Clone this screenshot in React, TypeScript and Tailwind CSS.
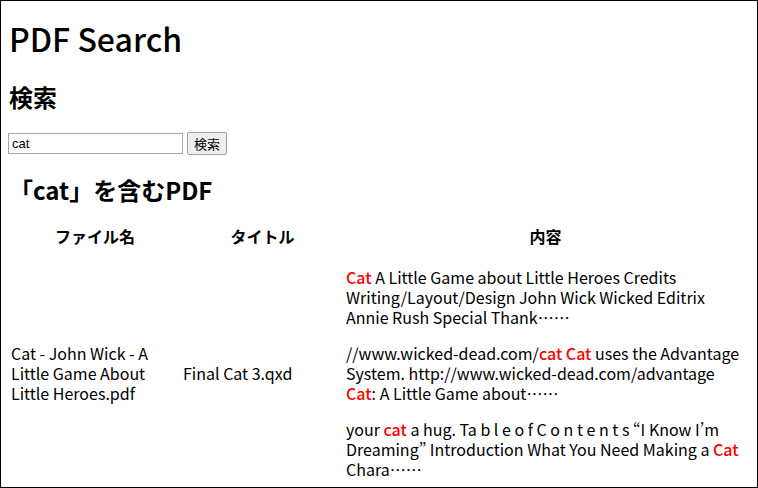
function Hit({ children }: { children: React.ReactNode }) {
  return <span className="font-medium text-[#ff0000]">{children}</span>
}

// full-width centred ellipsis, as the Japanese font draws it
function Ell() {
  return (
    <span lang="ja" className="[font-variant-east-asian:full-width]">
      ……
    </span>
  )
}

export default function App() {
  return (
    <div
      lang="ja"
      className="h-[488px] overflow-hidden border border-black bg-white px-2 text-black"
      style={{ fontFamily: '"Noto Sans CJK JP", "Noto Sans", sans-serif' }}
    >
      <h1 className="mt-[17px] text-[32px] leading-[40px] font-medium">PDF Search</h1>

      <h2 className="mt-[23px] text-[24px] leading-[32px] font-semibold">検索</h2>

      <form className="mt-[19px] flex items-center gap-1" onSubmit={(e) => e.preventDefault()}>
        <input
          defaultValue="cat"
          className="-ml-px h-[21px] w-[175px] border border-[#a9a9a9] px-[3px] text-[13px] outline-none"
          style={{ fontFamily: '"Liberation Sans", Arial, sans-serif' }}
        />
        <button
          type="submit"
          className="h-[23px] rounded-[2px] border border-[#a0a0a0] bg-[#efefef] px-[6px] text-[13px] leading-none"
        >
          検索
        </button>
      </form>

      <h2 className="mt-[19px] text-[24px] leading-[32px] font-semibold">「cat」を含むPDF</h2>

      <table className="mt-[17px] -ml-px w-full table-fixed border-separate border-spacing-[2px] text-[16px] leading-[20px]">
        <thead>
          <tr>
            <th className="w-[170px] p-px font-bold">ファイル名</th>
            <th className="w-[161px] p-px font-bold">タイトル</th>
            <th className="p-px font-bold">内容</th>
          </tr>
        </thead>
        <tbody>
          <tr>
            <td className="p-px align-middle">Cat - John Wick - A Little Game About Little Heroes.pdf</td>
            <td className="p-px align-middle">Final Cat 3.qxd</td>
            <td className="p-px align-middle">
              <p className="mt-[17px] mb-4">
                <Hit>Cat</Hit> A Little Game about Little Heroes Credits
                <br />
                Writing/Layout/Design John Wick Wicked Editrix
                <br />
                Annie Rush Special Thank<Ell />
              </p>
              <p className="my-4">
                //www.wicked-dead.com/<Hit>cat</Hit> <Hit>Cat</Hit> uses the Advantage
                <br />
                System. http://www.wicked-dead.com/advantage
                <br />
                <Hit>Cat</Hit>: A Little Game about<Ell />
              </p>
              <p className="my-4">
                your <Hit>cat</Hit> a hug. Ta b l e o f C o n t e n t s “I Know I’m
                <br />
                Dreaming” Introduction What You Need Making a <Hit>Cat</Hit>
                <br />
                Chara<Ell />
              </p>
            </td>
          </tr>
        </tbody>
      </table>
    </div>
  )
}
